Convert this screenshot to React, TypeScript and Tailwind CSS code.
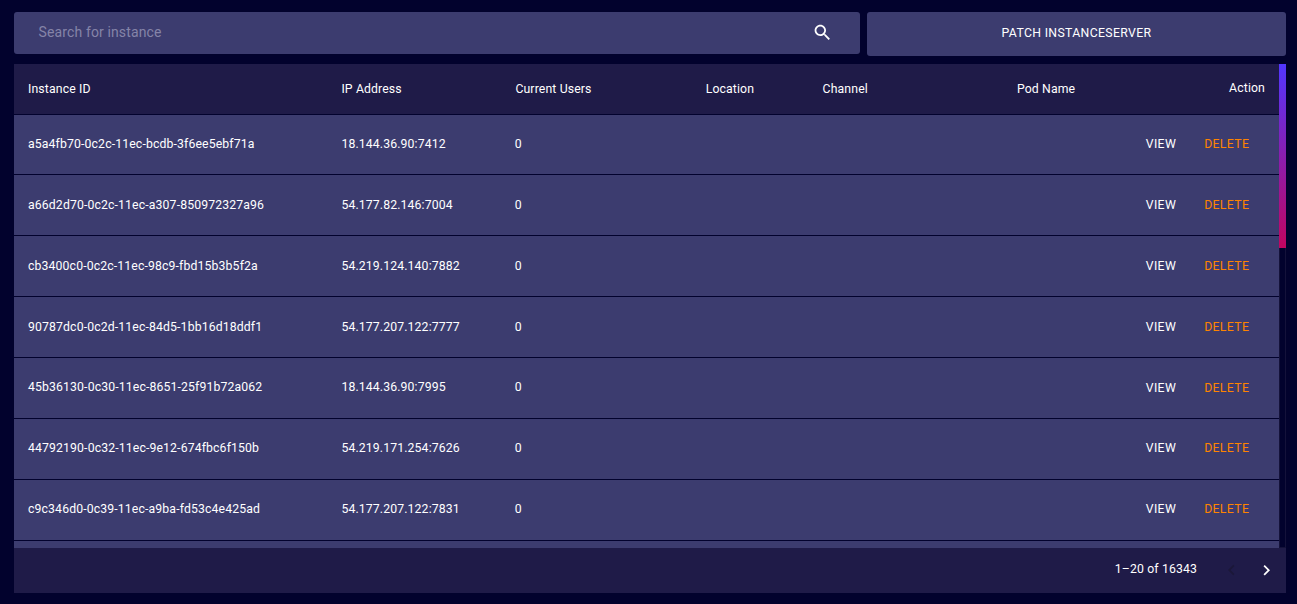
import React from "react";

const rows = [
  ["a5a4fb70-0c2c-11ec-bcdb-3f6ee5ebf71a", "18.144.36.90:7412"],
  ["a66d2d70-0c2c-11ec-a307-850972327a96", "54.177.82.146:7004"],
  ["cb3400c0-0c2c-11ec-98c9-fbd15b3b5f2a", "54.219.124.140:7882"],
  ["90787dc0-0c2d-11ec-84d5-1bb16d18ddf1", "54.177.207.122:7777"],
  ["45b36130-0c30-11ec-8651-25f91b72a062", "18.144.36.90:7995"],
  ["44792190-0c32-11ec-9e12-674fbc6f150b", "54.219.171.254:7626"],
  ["c9c346d0-0c39-11ec-a9ba-fd53c4e425ad", "54.177.207.122:7831"],
];

const columns =
  "grid grid-cols-[313.4px_173.3px_191px_116.6px_194.7px_1fr] items-center border-b border-[#02022d] pl-3.5 pr-3.5 shrink-0";

function SearchIcon() {
  return (
    <svg className="size-[21px]" viewBox="0 0 24 24" fill="currentColor">
      <path d="M15.5 14h-.79l-.28-.27C15.41 12.59 16 11.11 16 9.5 16 5.91 13.09 3 9.5 3S3 5.91 3 9.5 5.91 16 9.5 16c1.61 0 3.09-.59 4.23-1.57l.27.28v.79l5 4.99L20.49 19l-4.99-5zm-6 0C7.01 14 5 11.99 5 9.5S7.01 5 9.5 5 14 7.01 14 9.5 11.99 14 9.5 14z" />
    </svg>
  );
}

function SearchBar() {
  return (
    <div className="flex h-[42px] w-[846px] items-center justify-between rounded-[3px] bg-[#3c3c6f] pl-[24.5px] pr-[27px]">
      <span className="pb-[3px] text-[14px] tracking-[0.13px] text-[#8584a8]">Search for instance</span>
      <button className="pb-px text-white" aria-label="Search">
        <SearchIcon />
      </button>
    </div>
  );
}

function InstanceTable() {
  return (
    <div className="flex h-[484px]">
      <div className="flex min-w-0 flex-1 flex-col overflow-hidden bg-[#3c3c6f]">
        <div className={`${columns} h-[50.5px] bg-[#1f1b48]`}>
          <span>Instance ID</span>
          <span>IP Address</span>
          <span className="pl-[0.7px]">Current Users</span>
          <span>Location</span>
          <span className="pl-[0.3px]">Channel</span>
          <span className="flex justify-between">
            <span>Pod Name</span>
            <span className="-mt-px">Action</span>
          </span>
        </div>
        {rows.map(([id, ip]) => (
          <div key={id} className={`${columns} h-[60.875px] pt-[0.5px] leading-[17.5px]`}>
            <span>{id}</span>
            <span>{ip}</span>
            <span>0</span>
            <span />
            <span />
            <span className="flex justify-end gap-7 pr-[15.8px] pt-[0.5px] leading-[17.7px] tracking-[0.35px]">
              <button>VIEW</button>
              <button className="text-[#ff8400]">DELETE</button>
            </span>
          </div>
        ))}
      </div>
      <div className="w-[7px] border-x border-b border-[#14123a] bg-[#02022d]">
        <div className="-mx-px h-[184px] bg-linear-to-b/srgb from-[#5236ff] to-[#c20560]" />
      </div>
    </div>
  );
}

function Pagination() {
  return (
    <div className="flex h-[45px] items-center justify-end bg-[#1f1b48] pr-[9px]">
      <span className="mr-6 pb-[3px]">1–20 of 16343</span>
      <button className="text-[#1b1738]" aria-label="Previous page">
        <svg className="size-[21px]" viewBox="0 0 24 24" fill="currentColor">
          <path d="M15.41 16.09l-4.58-4.59 4.58-4.59L14 5.5l-6 6 6 6z" />
        </svg>
      </button>
      <button className="ml-3.5" aria-label="Next page">
        <svg className="size-[21px]" viewBox="0 0 24 24" fill="currentColor">
          <path d="M8.59 16.34l4.58-4.59-4.58-4.59L10 5.75l6 6-6 6z" />
        </svg>
      </button>
    </div>
  );
}

export default function App() {
  return (
    <main className="h-[604px] bg-[#02022d] pl-3.5 pr-[11px] pt-3 font-['Roboto',sans-serif] text-[12.25px] leading-[18px] tracking-[0.13px] text-white">
      <div className="flex h-[52px] items-start gap-[7px]">
        <SearchBar />
        <button className="h-11 flex-1 rounded-[3px] bg-[#3c3c6f] pb-[3px] tracking-[0.35px]">
          PATCH INSTANCESERVER
        </button>
      </div>
      <InstanceTable />
      <Pagination />
    </main>
  );
}
